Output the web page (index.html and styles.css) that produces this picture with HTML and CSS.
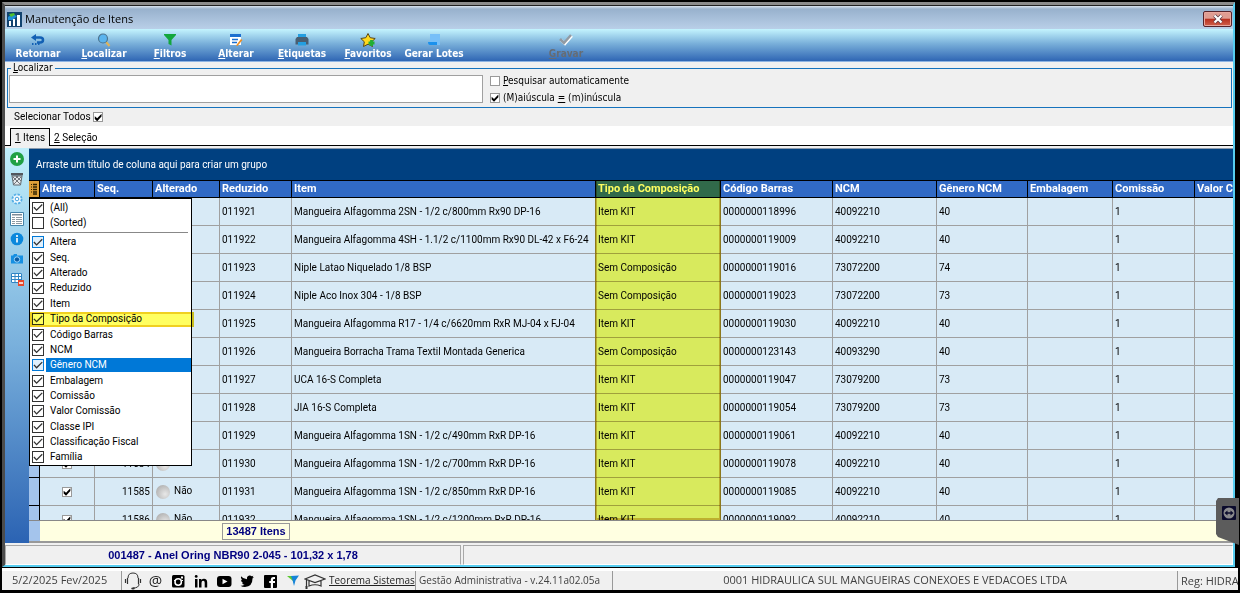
FILE: index.html
```html
<!DOCTYPE html>
<html lang="pt-BR">
<head>
<meta charset="utf-8">
<title>Manutenção de Itens</title>
<link rel="stylesheet" href="styles.css">
</head>
<body>
<div class="desktop">
<main class="window">
  <header class="titlebar">
    <svg class="app-icon" viewBox="0 0 15 15"><rect width="15" height="15" fill="#12436f"/><path d="M1 5l4-3 5 2-4 4H1z" fill="#1f8fd6"/><path d="M2 2l5-1 1 2-4 2z" fill="#4fc02e"/><path d="M2 14V9h2v5zM6 14V7h2v7zM10 14V3h3v11z" fill="#fff"/></svg>
    <h1>Manutenção de Itens</h1>
    <button class="close" aria-label="Fechar"><svg viewBox="0 0 12 10"><path d="M2.500 1.500l7 7M9.500 1.500l-7 7" stroke="#5b3a46" stroke-width="3.800"/><path d="M2.500 1.500l7 7M9.500 1.500l-7 7" stroke="#fff" stroke-width="2.200"/></svg></button>
  </header>
  <nav class="toolbar">
    <button><svg viewBox="0 0 16 14"><path d="M3 4.500h7q3 0 3 2.500t-3 2.500H7" fill="none" stroke="#1260b4" stroke-width="2.500"/><path d="M1 4.500L6 1v7z" fill="#1260b4"/><path d="M2 11h1.500M5 11h1.500M8 11h1.500" stroke="#1260b4" stroke-width="2"/></svg><span>Retornar</span></button>
    <button><svg viewBox="0 0 16 14"><path d="M10 9l3.500 4" stroke="#e0b45a" stroke-width="2.200"/><circle cx="7" cy="5.500" r="4.500" fill="#5ab4ee" stroke="#4d7590" stroke-width="1.200"/></svg><span><u>L</u>ocalizar</span></button>
    <button><svg viewBox="0 0 16 14"><path d="M2 1h12v1L9.500 7v5.500L6.500 11V7L2 2z" fill="#12a63c"/></svg><span><u>F</u>iltros</span></button>
    <button><svg viewBox="0 0 16 14"><rect x="2" y="1.500" width="11" height="10.500" fill="#fff"/><path d="M2 1h11v3H2z" fill="#1c6fd0"/><path d="M4 6.500h6M4 9.500h5" stroke="#1c6fd0" stroke-width="1.300"/><path d="M8 12.500l5-6.500 1.500 1-5 6z" fill="#f08c1e"/></svg><span><u>A</u>lterar</span></button>
    <button><svg viewBox="0 0 16 14"><path d="M4 1h8v4H4z" fill="#249ee0"/><path d="M3 4h10l1.500 2v5.500h-13V6z" fill="#485e72"/><path d="M4 9h8v3.500H4z" fill="#249ee0"/></svg><span><u>E</u>tiquetas</span></button>
    <button><svg viewBox="0 0 16 14"><path d="M8 .5l2.200 4.200 5 .8-3.500 3.300.8 4.700L8 11.200l-4.500 2.300.8-4.700L.8 5.500l5-.8z" fill="#ffd91e" stroke="#5a4514"/><path d="M11.500 7v6M8.500 10h6" stroke="#20af35" stroke-width="2.800"/></svg><span><u>F</u>avoritos</span></button>
    <button><svg viewBox="0 0 16 14"><path d="M4 1h10v11H4z" fill="#77bff8"/><path d="M2 9h9v3H4q-2 0-2-3z" fill="#1b91ed"/></svg><span>Gerar Lotes</span></button>
    <button class="after-gap" disabled><svg viewBox="0 0 16 14"><path d="M3 7l4 4 7-8" fill="none" stroke="#fff" stroke-width="2.500"/><path d="M2 6l4 4 7-8" fill="none" stroke="#929ba4" stroke-width="2.500"/></svg><span><u>G</u>ravar</span></button>
  </nav>
  <fieldset class="search">
    <legend><label for="q"><u>L</u>ocalizar</label></legend>
    <input id="q" type="text">
    <div class="options">
      <label><input type="checkbox" class="tick"><span><u>P</u>esquisar automaticamente</span></label>
      <label><input type="checkbox" class="tick" checked><span>(M)aiúscula <u>=</u> (m)inúscula</span></label>
    </div>
  </fieldset>
  <label class="select-all">Selecionar Todos <input type="checkbox" class="tick" checked></label>
  <div class="tabs" role="tablist">
    <button role="tab" class="tab active" aria-selected="true"><u>1</u> Itens</button>
    <button role="tab" class="tab" aria-selected="false"><u>2</u> Seleção</button>
  </div>
  <section class="work">
    <aside class="side">
      <button aria-label="Incluir"><svg viewBox="0 0 14 14"><circle cx="7" cy="7" r="7" fill="#20a044"/><path d="M7 3.500v7M3.500 7h7" stroke="#fff" stroke-width="2"/></svg></button>
      <button aria-label="Excluir"><svg viewBox="0 0 14 14"><path d="M1 1h12v2.500H1z" fill="#53585e"/><path d="M2 4h10l-1.500 9h-7z" fill="#e4e8eb" stroke="#62686e"/><path d="M3 5l7 7M6 4l5 5M11 5l-7 7M8 4L3 9" stroke="#62686e" stroke-width=".9"/></svg></button>
      <button aria-label="Configurar"><svg viewBox="0 0 14 14"><circle cx="7" cy="7" r="4.600" fill="#f2faff" stroke="#55aee5" stroke-width="1.800" stroke-dasharray="2.400 1.200"/><circle cx="7" cy="7" r="1.800" fill="#fff" stroke="#47a3df"/></svg></button>
      <button aria-label="Grade"><svg viewBox="0 0 14 14"><path d="M.5.500h13v13H.5z" fill="#fff" stroke="#4484ab"/><path d="M2 2h10v1.500H2z" fill="#7c8b98"/><path d="M2 5.500h3M6 5.500h6M2 7.500h3M6 7.500h6M2 9.500h3M6 9.500h6M2 11.500h3M6 11.500h6" stroke="#8d99a2"/></svg></button>
      <button aria-label="Informações"><svg viewBox="0 0 14 14"><circle cx="7" cy="7" r="6.300" fill="#0b87dc"/><path d="M7 6v4.500M7 3v2" stroke="#fff" stroke-width="1.600"/></svg></button>
      <button aria-label="Imagem"><svg viewBox="0 0 14 14"><path d="M1 3.500h2L4 2h3v1.500h6v8H1z" fill="#168fe2"/><circle cx="7" cy="7.500" r="2.700" fill="#0a5ca5" stroke="#9fd8ff"/></svg></button>
      <button aria-label="Remover grade"><svg viewBox="0 0 14 14"><path d="M1 1h11v10H1z" fill="#fff"/><path d="M1.500 1.500h10v9h-10zM5 1.500v9M8.500 1.500v9M1.500 4.500h10M1.500 7.500h10" fill="none" stroke="#2f84c4"/><path d="M8 8h6v6H8z" fill="#e8482c"/><path d="M9 11h4" stroke="#fff" stroke-width="1.500"/></svg></button>
    </aside>
    <div class="grid">
      <div class="groupbar">Arraste um título de coluna aqui para criar um grupo</div>
      <div class="rows">
        <table>
          <colgroup><col class="c-ind"><col class="c-alt"><col class="c-seq"><col class="c-altd"><col class="c-red"><col class="c-item"><col class="c-tipo"><col class="c-cod"><col class="c-ncm"><col class="c-gen"><col class="c-emb"><col class="c-com"><col class="c-val"></colgroup>
          <thead><tr><th class="ind"><svg viewBox="0 0 10 14"><path d="M4 2.500h4M4 5h4M4 7.500h4M4 10h4M4 12h4" stroke="#322300" stroke-width="1.300"/><path d="M2 2.500h1M2 5h1M2 7.500h1M2 10h1" stroke="#322300"/></svg></th><th>Altera</th><th>Seq.</th><th>Alterado</th><th>Reduzido</th><th>Item</th><th>Tipo da Composição</th><th>Código Barras</th><th>NCM</th><th>Gênero NCM</th><th>Embalagem</th><th>Comissão</th><th>Valor Comissão</th></tr></thead>
          <tbody>
            <tr><td class="ind"></td><td class="ck"><input type="checkbox" class="tick" aria-label="Altera" checked></td><td class="num">11575</td><td><i class="ball"></i>Não</td><td>011921</td><td>Mangueira Alfagomma 2SN - 1/2 c/800mm Rx90 DP-16</td><td>Item KIT</td><td>0000000118996</td><td>40092210</td><td>40</td><td></td><td>1</td><td></td></tr>
            <tr><td class="ind"></td><td class="ck"><input type="checkbox" class="tick" aria-label="Altera" checked></td><td class="num">11576</td><td><i class="ball"></i>Não</td><td>011922</td><td>Mangueira Alfagomma 4SH - 1.1/2 c/1100mm Rx90 DL-42 x F6-24</td><td>Item KIT</td><td>0000000119009</td><td>40092210</td><td>40</td><td></td><td>1</td><td></td></tr>
            <tr><td class="ind"></td><td class="ck"><input type="checkbox" class="tick" aria-label="Altera" checked></td><td class="num">11577</td><td><i class="ball"></i>Não</td><td>011923</td><td>Niple Latao Niquelado 1/8 BSP</td><td>Sem Composição</td><td>0000000119016</td><td>73072200</td><td>74</td><td></td><td>1</td><td></td></tr>
            <tr><td class="ind"></td><td class="ck"><input type="checkbox" class="tick" aria-label="Altera" checked></td><td class="num">11578</td><td><i class="ball"></i>Não</td><td>011924</td><td>Niple Aco Inox 304 - 1/8 BSP</td><td>Sem Composição</td><td>0000000119023</td><td>73072200</td><td>73</td><td></td><td>1</td><td></td></tr>
            <tr><td class="ind"></td><td class="ck"><input type="checkbox" class="tick" aria-label="Altera" checked></td><td class="num">11579</td><td><i class="ball"></i>Não</td><td>011925</td><td>Mangueira Alfagomma R17 - 1/4 c/6620mm RxR MJ-04 x FJ-04</td><td>Item KIT</td><td>0000000119030</td><td>40092210</td><td>40</td><td></td><td>1</td><td></td></tr>
            <tr><td class="ind"></td><td class="ck"><input type="checkbox" class="tick" aria-label="Altera" checked></td><td class="num">11580</td><td><i class="ball"></i>Não</td><td>011926</td><td>Mangueira Borracha Trama Textil Montada Generica</td><td>Sem Composição</td><td>0000000123143</td><td>40093290</td><td>40</td><td></td><td>1</td><td></td></tr>
            <tr><td class="ind"></td><td class="ck"><input type="checkbox" class="tick" aria-label="Altera" checked></td><td class="num">11581</td><td><i class="ball"></i>Não</td><td>011927</td><td>UCA 16-S Completa</td><td>Item KIT</td><td>0000000119047</td><td>73079200</td><td>73</td><td></td><td>1</td><td></td></tr>
            <tr><td class="ind"></td><td class="ck"><input type="checkbox" class="tick" aria-label="Altera" checked></td><td class="num">11582</td><td><i class="ball"></i>Não</td><td>011928</td><td>JIA 16-S Completa</td><td>Item KIT</td><td>0000000119054</td><td>73079200</td><td>73</td><td></td><td>1</td><td></td></tr>
            <tr><td class="ind"></td><td class="ck"><input type="checkbox" class="tick" aria-label="Altera" checked></td><td class="num">11583</td><td><i class="ball"></i>Não</td><td>011929</td><td>Mangueira Alfagomma 1SN - 1/2 c/490mm RxR DP-16</td><td>Item KIT</td><td>0000000119061</td><td>40092210</td><td>40</td><td></td><td>1</td><td></td></tr>
            <tr><td class="ind"></td><td class="ck"><input type="checkbox" class="tick" aria-label="Altera" checked></td><td class="num">11584</td><td><i class="ball"></i>Não</td><td>011930</td><td>Mangueira Alfagomma 1SN - 1/2 c/700mm RxR DP-16</td><td>Item KIT</td><td>0000000119078</td><td>40092210</td><td>40</td><td></td><td>1</td><td></td></tr>
            <tr><td class="ind"></td><td class="ck"><input type="checkbox" class="tick" aria-label="Altera" checked></td><td class="num">11585</td><td><i class="ball"></i>Não</td><td>011931</td><td>Mangueira Alfagomma 1SN - 1/2 c/850mm RxR DP-16</td><td>Item KIT</td><td>0000000119085</td><td>40092210</td><td>40</td><td></td><td>1</td><td></td></tr>
            <tr><td class="ind"></td><td class="ck"><input type="checkbox" class="tick" aria-label="Altera" checked></td><td class="num">11586</td><td><i class="ball"></i>Não</td><td>011932</td><td>Mangueira Alfagomma 1SN - 1/2 c/1200mm RxR DP-16</td><td>Item KIT</td><td>0000000119092</td><td>40092210</td><td>40</td><td></td><td>1</td><td></td></tr>
          </tbody>
        </table>
        <div class="column-mark"></div>
      </div>
      <div class="footer"><div class="count">13487 Itens</div></div>
      <div class="picker">
        <label><input type="checkbox" checked><span>(All)</span></label>
        <label><input type="checkbox"><span>(Sorted)</span></label>
        <hr>
        <label class="hot"><input type="checkbox" checked><span>Altera</span></label>
        <label><input type="checkbox" checked><span>Seq.</span></label>
        <label><input type="checkbox" checked><span>Alterado</span></label>
        <label><input type="checkbox" checked><span>Reduzido</span></label>
        <label><input type="checkbox" checked><span>Item</span></label>
        <label class="marked"><input type="checkbox" checked><span>Tipo da Composição</span></label>
        <label><input type="checkbox" checked><span>Código Barras</span></label>
        <label><input type="checkbox" checked><span>NCM</span></label>
        <label class="current"><input type="checkbox" checked><span>Gênero NCM</span></label>
        <label><input type="checkbox" checked><span>Embalagem</span></label>
        <label><input type="checkbox" checked><span>Comissão</span></label>
        <label><input type="checkbox" checked><span>Valor Comissão</span></label>
        <label><input type="checkbox" checked><span>Classe IPI</span></label>
        <label><input type="checkbox" checked><span>Classificação Fiscal</span></label>
        <label><input type="checkbox" checked><span>Família</span></label>
      </div>
    </div>
  </section>
  <div class="record"><div class="record-name">001487 - Anel Oring NBR90 2-045 - 101,32 x 1,78</div><div class="record-rest"></div></div>
</main>
<footer class="status">
  <div class="date">5/2/2025 Fev/2025</div>
  <div class="social">
    <a href="#" aria-label="Suporte"><svg viewBox="0 0 18 18"><path d="M4 6Q4 1 9 1t5 5M15 12q0 4-6 4" fill="none" stroke="#333"/><path d="M3.500 6v6M1.500 7v4M14.500 6v6M16.500 7v4" stroke="#333" stroke-width="1.200"/><ellipse cx="9" cy="16.500" rx="1.800" ry="1" fill="#333"/></svg></a>
    <a href="#" class="at" aria-label="E-mail">@</a>
    <a href="#" aria-label="Instagram"><svg viewBox="0 0 18 18"><rect x="3" y="3" width="12.500" height="12.500" rx="1.500"/><path d="M5 8.500h1M13 8.500h1" stroke="#fff"/><circle cx="9.200" cy="10" r="3.200" fill="none" stroke="#fff" stroke-width="1.500"/><path d="M12 4.500h2v2h-2z" fill="#fff"/></svg></a>
    <a href="#" aria-label="LinkedIn"><svg viewBox="0 0 18 18"><path d="M3 7h2.500v8.500H3zM7 7h2.400v1.200Q10.300 6.800 12 6.800q3.200 0 3.200 3.700v5h-2.500v-4.700q0-2-1.500-2-1.700 0-1.700 2.200v4.500H7z"/><circle cx="4.200" cy="4.400" r="1.400"/></svg></a>
    <a href="#" aria-label="YouTube"><svg viewBox="0 0 18 18"><rect x="2" y="4" width="14.500" height="11" rx="3"/><path d="M7.500 6.700l5 2.800-5 2.800z" fill="#fff"/></svg></a>
    <a href="#" aria-label="Twitter"><svg viewBox="0 0 18 18"><path d="M3 4.200q2.400 2.900 6 3.100-.5-3.300 2.400-3.800 1.400-.2 2.300.8l1.700-.6-1 1.600 1.500-.3-1.400 1.500q0 8-7.500 8.500-2.500.1-4.500-1.200 2.300.2 4-1.100-1.900-.2-2.500-2h1.200Q3 10 3 7.700l1.200.4Q2.300 6.500 3 4.200z"/></svg></a>
    <a href="#" aria-label="Facebook"><svg viewBox="0 0 18 18"><rect x="3" y="3" width="13" height="13" rx="1"/><path d="M12 16v-5h2V9h-2V8q0-1 1-1h1V5h-2q-2.200 0-2.200 2.500V9H8.200v2h1.600v5z" fill="#fff"/></svg></a>
    <a href="#" aria-label="Teorema"><svg viewBox="0 0 18 18"><path d="M3 4h6l2 4-2 1z" fill="#5fc934"/><path d="M7 4l8-.5-3.500 5L10 14 8.500 8z" fill="#1684d8"/></svg></a>
    <a href="#" class="wide" aria-label="Treinamento"><svg viewBox="0 0 22 18"><path d="M1 7l10-4 10 4-10 3.500zM5 9v5q6-2.500 12 0V9M2.500 8v7" fill="none" stroke="#333" stroke-width="1.200"/><path d="M1.500 14h2v3h-2z" fill="#333"/></svg></a>
  </div>
  <a class="brand" href="#">Teorema Sistemas</a>
  <div class="version">Gestão Administrativa - v.24.11a02.05a</div>
  <div class="company">0001 HIDRAULICA SUL MANGUEIRAS CONEXOES E VEDACOES LTDA</div>
  <div class="reg">Reg: HIDRAULICA</div>
</footer>
<button class="remote" aria-label="Suporte remoto"><svg viewBox="0 0 23 47"><path d="M2 0h21v47L2 39l-2-3V3z" fill="#5c5c5c"/><rect x="6" y="8" width="14" height="14" rx="1" fill="#0b0b2c"/><circle cx="13" cy="15" r="5.500" fill="#8b8b8d"/><path d="M8.500 15l3-2.500v1.700h3v-1.700l3 2.500-3 2.500v-1.700h-3v1.700z" fill="#0b0b2c"/></svg></button>
</div>
</body>
</html>
```
FILE: styles.css
```css
* { box-sizing: border-box; }
body {
  margin: 0;
  background: #000;
  color: #000;
  font: 10px/14px Roboto, "Liberation Sans", sans-serif;
}
button { border: 0; padding: 0; background: none; font: inherit; color: inherit; }
svg { display: block; }

.desktop {
  position: relative;
  display: flex;
  flex-direction: column;
  height: 100vh;
  padding: 2px 2px 3px 2px;
  overflow: hidden;
}
.window {
  flex: 1;
  min-height: 0;
  display: flex;
  flex-direction: column;
  margin-right: 3px;
  border-top: 3px solid #8c8c8c;
  border-left: 3px solid #4c4c4c;
  border-right: 2px solid #56cdf0;
  border-bottom: 2px solid #56cdf0;
  background: #f0f0f0;
}

.titlebar {
  display: flex;
  align-items: center;
  gap: 3px;
  height: 24px;
  padding: 3px 1px 0 2px;
  background: linear-gradient(#dbe4ee 0, #98b1cd 3px, #b9cfe8 100%);
  border-top: 1px solid #222;
  font: 11px/16px "Open Sans", sans-serif;
}
.titlebar h1 { margin: 0; flex: 1; font: inherit; }
.app-icon { width: 15px; height: 15px; }
.close {
  display: grid;
  place-items: center;
  width: 29px;
  height: 16px;
  border: 1px solid #54232a;
  border-radius: 2px;
  box-shadow: inset 0 0 0 1px #e9a79e;
  background: linear-gradient(#df9d92 0 45%, #b8301f 50%, #d0614c);
}
.close svg { width: 12px; height: 10px; }

.toolbar {
  display: flex;
  height: 33px;
  background: linear-gradient(#c4f4fe, #7ab0da 45%, #2f66b4);
  border-bottom: 1px solid #8fb4e2;
  color: #fff;
  font: bold 10px/14px "DejaVu Sans Condensed", "DejaVu Sans", sans-serif;
}
.toolbar button {
  display: flex;
  flex-direction: column;
  align-items: center;
  width: 66px;
  padding-top: 4px;
  white-space: nowrap;
}
.toolbar svg { width: 16px; height: 14px; }
.toolbar .after-gap { margin-left: 66px; color: #666c74; }

.search {
  display: flex;
  gap: 7px;
  margin: 0 1px 0 2px;
  padding: 1px 0 3px 1px;
  border: 1px solid #1673bd;
  min-width: 0;
  font: 10px/12px "DejaVu Sans Condensed", "DejaVu Sans", sans-serif;
}
.search legend { padding: 0 2px; margin-left: 2px; height: 12px; }
.search input[type=text] {
  width: 474px;
  height: 28px;
  border: 1px solid #a0a0a0;
  background: #fff;
}
.options { display: flex; flex-direction: column; gap: 5px; }
.options label { display: flex; align-items: center; gap: 3px; }

input[type=checkbox] { appearance: none; margin: 0; flex: none; background: #fff; }
.tick { display: inline-grid; place-items: center; width: 10px; height: 10px; border: 1px solid #999; vertical-align: middle; }
.tick:checked::before {
  content: "";
  width: 8px;
  height: 8px;
  background: #000;
  clip-path: polygon(8% 35%, 38% 62%, 92% 5%, 92% 40%, 38% 98%, 8% 70%);
}
.select-all { padding: 2px 9px 2px; height: 18px; }

.tabs {
  display: flex;
  height: 20px;
  padding: 2px 5px 0;
  background: #fff;
  border-bottom: 1px solid #000;
}
.tab { padding: 1px 4px 0; height: 18px; }
.tab.active { padding-top: 0; background: #f0f0f0; border: solid #000; border-width: 1px 1px 0; }

.work { flex: 1; min-height: 0; display: flex; margin-top: 2px; }
.side {
  display: flex;
  flex-direction: column;
  align-items: center;
  gap: 6px;
  width: 24px;
  padding-top: 4px;
  background: linear-gradient(#c1effb, #79b0dc 50%, #2b63b3);
}
.side svg { width: 14px; height: 14px; }

.grid {
  position: relative;
  flex: 1;
  min-width: 0;
  display: flex;
  flex-direction: column;
}
.groupbar { height: 33px; padding: 9px 7px; background: #004080; color: #fff; border-bottom: 1px solid #000; border-top: 1px solid #8a9aac; }
.rows { position: relative; flex: 1; min-height: 0; overflow: hidden; background: #d8eaf6; }
table { table-layout: fixed; width: 1250px; border-spacing: 0; }
.c-ind { width: 11px; } .c-alt { width: 55px; } .c-seq { width: 58px; } .c-altd { width: 67px; }
.c-red { width: 72px; } .c-item { width: 304px; } .c-tipo { width: 125px; } .c-cod { width: 112px; }
.c-ncm { width: 104px; } .c-gen { width: 91px; } .c-emb { width: 85px; } .c-com { width: 82px; } .c-val { width: 84px; }
th, td { padding: 0 2px; white-space: nowrap; overflow: hidden; text-align: left; }
th {
  height: 17px;
  background: #316ac5;
  border-right: 1px solid #000;
  border-bottom: 1px solid #000;
  color: #fff;
  font: bold 11px/16px Roboto, "Liberation Sans", sans-serif;
}
td { height: 28px; border-right: 1px solid #a0a0a0; border-bottom: 1px solid #a0a0a0; }
.ind { padding: 0; background: #a4c4ec; border-color: #000; }
th.ind { background: #e0a038; }
.ind svg { width: 10px; height: 14px; }
.ck { text-align: center; }
.num { text-align: right; }
.ball {
  display: inline-block;
  width: 14px;
  height: 14px;
  margin: 0 4px 0 1px;
  border-radius: 50%;
  vertical-align: middle;
  background: radial-gradient(circle at 65% 65%, #e8e8e8, #b4b4b4 75%);
}
.column-mark {
  position: absolute;
  top: 0;
  bottom: 0;
  left: 566px;
  width: 126px;
  border: 2px solid #e0c030;
  border-top: 0;
  background: #ffff60;
  mix-blend-mode: multiply;
}
.footer {
  height: 23px;
  padding: 2px 0 2px 193px;
  background: linear-gradient(90deg, #a4c4ec 11px, #ffffe1 11px);
  border-top: 1px solid #888;
  border-bottom: 2px solid #999;
}
.count { width: 68px; border: 1px solid #999; color: #000080; text-align: center; font: bold 11px/15px "Liberation Sans", Arial, sans-serif; }

.picker {
  position: absolute;
  left: 0;
  top: 50px;
  width: 163px;
  height: 268px;
  display: flex;
  flex-direction: column;
  padding: 1px 0 0 2px;
  border: 1px solid #000;
  background: #fff;
}
.picker label { flex: 1; display: flex; align-items: center; gap: 2px; }
.picker span { flex: 1; padding-left: 4px; }
.picker hr { margin: 1px 3px 2px 0; border: 0; border-top: 1px solid #888; }
.picker input { display: grid; place-items: center; width: 12px; height: 12px; border: 1px solid #333; }
.picker input:checked::before {
  content: "";
  width: 10px;
  height: 10px;
  background: #333;
  clip-path: polygon(4% 50%, 14% 42%, 36% 66%, 88% 14%, 97% 23%, 36% 84%);
}
.picker .hot input, .picker .current input { border-color: #0078d7; background: #e0f0fc; }
.picker .current span { background: #0078d7; color: #fff; }
.picker .marked { position: relative; }
.picker .marked::after {
  content: "";
  position: absolute;
  inset: 0 -3px 0 -2px;
  border: 2px solid #f0d020;
  background: #ffff60;
  mix-blend-mode: multiply;
}

.record {
  display: flex;
  gap: 2px;
  height: 22px;
  padding-top: 2px;
  color: #000080;
  text-align: center;
  font: bold 11px/18px "Liberation Sans", Arial, sans-serif;
}
.record-name { width: 456px; border: 1px solid #a8a8a8; border-color: #a8a8a8 #a8a8a8 #fff #a8a8a8; }
.record-rest { flex: 1; border: 1px solid #a8a8a8; border-color: #a8a8a8 #fff #fff #a8a8a8; }

.status {
  display: flex;
  height: 22px;
  margin-top: 1px;
  border-top: 3px solid #fff;
  background: #f0f0f0;
  color: #404040;
  font: 11px/17px "Open Sans", sans-serif;
  white-space: nowrap;
  overflow: hidden;
}
.date { width: 120px; padding-left: 10px; border-right: 1px solid #999; }
.social { display: flex; align-items: center; gap: 5px; width: 206px; padding-left: 2px; }
.social svg { width: 18px; height: 18px; }
.social .wide { margin-left: -3px; }
.social .wide svg { width: 22px; }
.social a { flex: none; color: #222; text-decoration: none; }
.social .at { width: 17px; font-size: 15px; text-align: center; }
.brand { width: 88px; padding-left: 1px; color: #222; border-right: 1px solid #999; font-size: 10px; line-height: 19px; }
.version { width: 197px; padding-left: 3px; border-right: 1px solid #999; font-size: 10px; line-height: 19px; }
.company { flex: 1; text-align: center; }
.reg { width: 61px; padding-left: 3px; border-left: 1px solid #999; line-height: 19px; }

.remote { position: absolute; right: 1px; bottom: 48px; width: 23px; height: 47px; }
.remote svg { width: 23px; height: 47px; }
```
